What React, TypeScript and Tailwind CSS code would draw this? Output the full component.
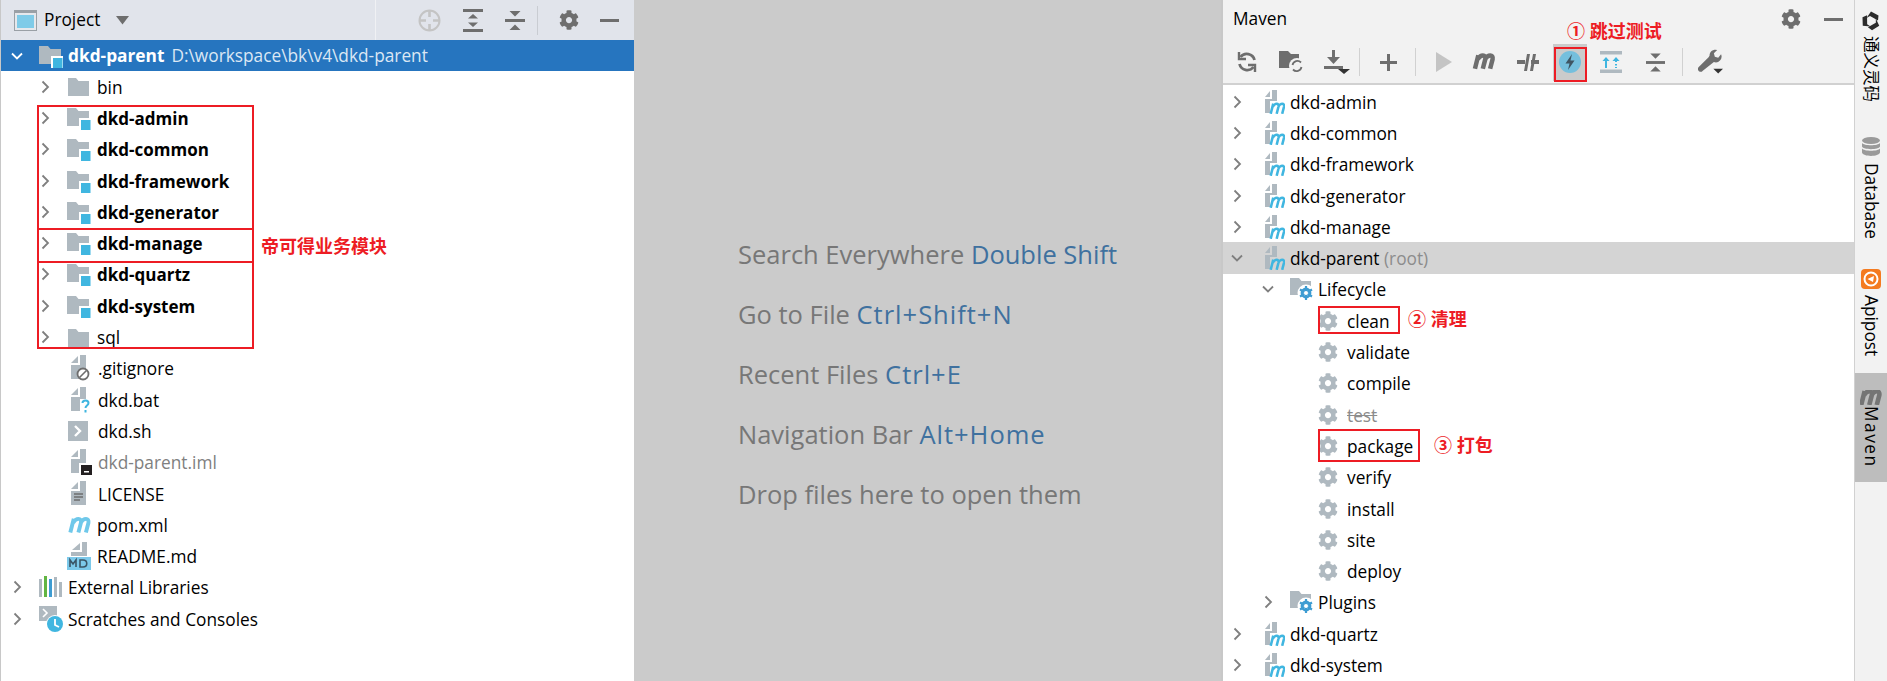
import type { ReactNode } from 'react';
import { FaCog } from 'react-icons/fa';

const FOLDER = '#AFB9C0';
const CYAN = '#40B6E0';

function Chevron({ open, white }: { open?: boolean; white?: boolean }) {
  const color = white ? '#ffffff' : '#7f7f7f';
  return (
    <svg width="14" height="14" viewBox="0 0 14 14" fill="none" stroke={color} strokeWidth="1.8">
      {open ? <path d="M2 4.5 7 9.5 12 4.5" /> : <path d="M4.5 1.5 10 7 4.5 12.5" />}
    </svg>
  );
}

function Folder() {
  return (
    <svg width="23" height="21" viewBox="0 0 23 21">
      <path d="M1 2h8l2.5 3H22v15H1z" fill={FOLDER} />
    </svg>
  );
}

function ModuleFolder() {
  return (
    <svg width="24" height="24" viewBox="0 0 24 24">
      <path d="M0 2h9l2.500 3H22v15H0z" fill={FOLDER} />
      <rect x="12" y="12" width="12" height="12" fill="#ffffff" />
      <rect x="14" y="14" width="9.500" height="10" fill={CYAN} />
    </svg>
  );
}

function FileBase({ children }: { children?: ReactNode }) {
  return (
    <svg width="24" height="26" viewBox="0 0 24 26">
      <path d="M3 8 10 1v7z" fill={FOLDER} />
      <path d="M12 0h6v24H3V10h9z" fill={FOLDER} />
      {children}
    </svg>
  );
}

function MavenM({ color, width = 2.6 }: { color: string; width?: number }) {
  return (
    <path
      d="M2 18 5 6M4.500 9.500C7 5 12 5 11.200 9.500L9 18M11 9.500C13.500 5 18.500 5 17.700 9.500L15.500 18"
      fill="none"
      stroke={color}
      strokeWidth={width}
    />
  );
}

function PomModule() {
  return (
    <svg width="21" height="24" viewBox="0 0 21 24">
      <path d="M1 7 6 1v6z" fill={FOLDER} />
      <path d="M8 0h5v11H6v12H1V9h7z" fill={FOLDER} />
      <g transform="translate(5 8.500) scale(0.85)">
        <MavenM color={CYAN} width={3} />
      </g>
    </svg>
  );
}

function FolderGear() {
  return (
    <svg width="24" height="24" viewBox="0 0 24 24">
      <path d="M0 1h9l2.500 3H21v14H0z" fill={FOLDER} />
      <circle cx="16" cy="16" r="8.500" fill="#ffffff" />
      <circle cx="16" cy="16" r="4" fill="none" stroke="#3D9CD2" strokeWidth="2.800" />
      <path d="M16 9v14M10 12.500l12 7M22 12.500l-12 7" stroke="#3D9CD2" strokeWidth="2.200" />
      <circle cx="16" cy="16" r="2" fill="#ffffff" />
    </svg>
  );
}

function Gear() {
  return <FaCog size={20} color={FOLDER} />;
}

function Libraries() {
  return (
    <svg width="23" height="24" viewBox="0 0 23 24">
      <rect x="0" y="4" width="3" height="18" fill={FOLDER} />
      <rect x="5" y="1" width="3" height="21" fill="#62B543" />
      <rect x="10" y="4" width="3" height="18" fill="#3D9CD2" />
      <rect x="15" y="2" width="3" height="20" fill={FOLDER} />
      <rect x="20" y="7" width="3" height="15" fill={FOLDER} />
    </svg>
  );
}

function Scratches() {
  return (
    <svg width="25" height="28" viewBox="0 0 25 28">
      <rect x="0" y="1" width="18" height="15" fill={FOLDER} />
      <path d="M4 4l4 4-4 4" fill="none" stroke="#ffffff" strokeWidth="1.600" />
      <circle cx="16" cy="19" r="9" fill="#ffffff" />
      <circle cx="16" cy="19" r="8" fill={CYAN} />
      <path d="M16 14v6l4 2" fill="none" stroke="#ffffff" strokeWidth="1.800" />
    </svg>
  );
}

type RowProps = {
  indent: string;
  chevronSlot?: string;
  iconSlot?: string;
  chevron?: 'open' | 'closed';
  icon: ReactNode;
  children: ReactNode;
  active?: string;
};

function Row({ indent, chevronSlot = 'w-[29px]', iconSlot = 'w-[30px]', chevron, icon, children, active = '' }: RowProps) {
  return (
    <div className={`flex h-[31.3px] items-center ${indent} ${active}`}>
      <div className={`flex shrink-0 items-center ${chevronSlot}`}>
        {chevron && <Chevron open={chevron === 'open'} />}
      </div>
      <div className={`flex shrink-0 items-center ${iconSlot}`}>{icon}</div>
      <span className="whitespace-nowrap pt-[2px]">{children}</span>
    </div>
  );
}

function ProjectPanel() {
  const file = 'pl-[37px]';
  const leaf = 'pl-[10px]';
  return (
    <div className="flex w-[634px] shrink-0 flex-col border-l border-[#c8c8c8] bg-white">
      <div className="flex h-[40px] items-center bg-[#e1e4eb] pl-[13px] pr-[11px] text-black">
        <svg width="23" height="21" viewBox="0 0 23 21">
          <rect x="0.500" y="0.500" width="22" height="20" fill="#e6e8ec" stroke="#9aa0a6" />
          <rect x="0" y="0" width="23" height="3" fill="#9aa0a6" />
          <rect x="3" y="5" width="17" height="13" fill="#7fcbe8" />
        </svg>
        <span className="ml-[7px]">Project</span>
        <svg className="ml-[16px]" width="13" height="9" viewBox="0 0 13 9">
          <path d="M0 0h13L6.500 8.500z" fill="#6e6e6e" />
        </svg>
        <div className="ml-[246px] h-[40px] w-px bg-[#f0f1f4]" />
        <svg className="ml-[42px]" width="23" height="23" viewBox="0 0 23 23" fill="none" stroke="#c4c4c4" strokeWidth="2">
          <circle cx="11.500" cy="11.500" r="10" />
          <path d="M11.500 2v6M11.500 15v6M2 11.500h6M15 11.500h6" strokeWidth="2.600" />
        </svg>
        <svg className="ml-[22px]" width="20" height="23" viewBox="0 0 20 23" fill="#6e6e6e">
          <rect y="0" width="20" height="3" />
          <rect y="20" width="20" height="3" />
          <path d="M5 9.500 10 5l5 4.500zM5 13.500 10 18l5-4.500z" />
        </svg>
        <svg className="ml-[22px]" width="20" height="21" viewBox="0 0 20 21" fill="#6e6e6e">
          <rect y="9" width="20" height="3" />
          <path d="M4.500 1h11L10 6.500zM4.500 20h11L10 14.500z" />
        </svg>
        <div className="ml-[12px] h-[29px] w-px bg-[#c9ccd2]" />
        <FaCog className="ml-[21px]" size={20} color="#6e6e6e" />
        <div className="ml-[21px] h-[3px] w-[19px] bg-[#6e6e6e]" />
      </div>
      <div className="flex h-[31px] items-center bg-[#2675bf] pl-[9px] text-white">
        <div className="flex w-[29px] items-center">
          <Chevron open white />
        </div>
        <div className="flex w-[29px] items-center">
          <ModuleFolder />
        </div>
        <span className="pt-px font-bold">dkd-parent</span>
        <span className="ml-[7px] pt-px text-[#dbe7f4]">D:\workspace\bk\v4\dkd-parent</span>
      </div>
      <Row indent={file} chevron="closed" icon={<Folder />}>bin</Row>
      {['dkd-admin', 'dkd-common', 'dkd-framework', 'dkd-generator', 'dkd-manage', 'dkd-quartz', 'dkd-system'].map((name) => (
        <Row key={name} indent={file} chevron="closed" icon={<ModuleFolder />}>
          <b className="text-[17px] font-bold">{name}</b>
        </Row>
      ))}
      <Row indent={file} chevron="closed" icon={<Folder />}>sql</Row>
      <Row indent={leaf} chevronSlot="w-[57px]" icon={
        <FileBase>
          <circle cx="15" cy="19" r="5.500" fill="#ffffff" stroke="#6e6e6e" strokeWidth="1.800" />
          <path d="M11.500 22.500 18.500 15.500" stroke="#6e6e6e" strokeWidth="1.600" />
        </FileBase>
      }>.gitignore</Row>
      <Row indent={leaf} chevronSlot="w-[57px]" icon={
        <FileBase>
          <rect x="12" y="12" width="12" height="14" fill="#ffffff" />
          <path d="M14.500 16c0-3.500 6-3.500 6 0 0 2.500-3 2.500-3 5M17.500 23v2.500" fill="none" stroke={CYAN} strokeWidth="2" />
        </FileBase>
      }>dkd.bat</Row>
      <Row indent={leaf} chevronSlot="w-[57px]" icon={
        <svg width="20" height="20" viewBox="0 0 20 20">
          <rect width="20" height="20" fill={FOLDER} />
          <path d="M7 5l5 5-5 5" fill="none" stroke="#ffffff" strokeWidth="2.400" />
        </svg>
      }>dkd.sh</Row>
      <Row indent={leaf} chevronSlot="w-[57px]" icon={
        <FileBase>
          <rect x="11" y="14" width="13" height="12" fill="#ffffff" />
          <rect x="13" y="16" width="11" height="10" fill="#231f20" />
          <rect x="16" y="22" width="5" height="1.500" fill="#ffffff" />
        </FileBase>
      }><span className="text-[#808080]">dkd-parent.iml</span></Row>
      <Row indent={leaf} chevronSlot="w-[57px]" icon={
        <FileBase>
          <path d="M6 13h9M6 16h9M6 19h6" stroke="#6e6e6e" strokeWidth="1.500" />
        </FileBase>
      }>LICENSE</Row>
      <Row indent={file} icon={
        <svg width="24" height="22" viewBox="0 0 20 20">
          <g transform="translate(0 -2) scale(1.05)">
            <MavenM color="#6FC8EA" width={3.400} />
          </g>
        </svg>
      }>pom.xml</Row>
      <Row indent={file} icon={
        <svg width="24" height="28" viewBox="0 0 24 28">
          <path d="M5 8 13 1v7z" fill={FOLDER} />
          <path d="M15 0h5v14H4V10h11z" fill={FOLDER} />
          <rect y="15" width="24" height="13" fill="#7CC9EA" />
          <path d="M3 25v-7l3 4 3-4v7M13 18v7h3c5 0 5-7 0-7z" fill="none" stroke="#3a5566" strokeWidth="1.600" />
        </svg>
      }>README.md</Row>
      <Row indent="pl-[9px]" iconSlot="w-[29px]" chevron="closed" icon={<Libraries />}>External Libraries</Row>
      <Row indent="pl-[9px]" iconSlot="w-[29px]" chevron="closed" icon={<Scratches />}>Scratches and Consoles</Row>
    </div>
  );
}

function Hint({ text, keys, tracking = '' }: { text: string; keys: string; tracking?: string }) {
  return (
    <div className="whitespace-nowrap">
      <span className="text-[#777777]">{text} </span>
      <span className={`text-[#3f719f] ${tracking}`}>{keys}</span>
    </div>
  );
}

function EmptyEditor() {
  return (
    <div className="flex flex-1 flex-col gap-[31px] bg-[#cbcbcb] pl-[104px] pt-[240px] text-[25.500px] leading-[29px]">
      <Hint text="Search Everywhere" keys="Double Shift" />
      <Hint text="Go to File" keys="Ctrl+Shift+N" tracking="tracking-[1px]" />
      <Hint text="Recent Files" keys="Ctrl+E" tracking="tracking-[1px]" />
      <Hint text="Navigation Bar" keys="Alt+Home" tracking="tracking-[1px]" />
      <div className="text-[#777777]">Drop files here to open them</div>
    </div>
  );
}

function ToolbarSep({ className }: { className: string }) {
  return <div className={`h-[28px] w-px bg-[#d1d1d1] ${className}`} />;
}

function MavenToolbar() {
  return (
    <div className="flex h-[47px] items-center border-b-2 border-[#d1d1d1] bg-[#f2f2f2] pl-[14px] pt-[3px]">
      <svg width="20" height="20" viewBox="0 0 20 20" fill="none" stroke="#6e6e6e" strokeWidth="2.800">
        <path d="M17.500 8A8 8 0 0 0 3.500 5M2.500 12a8 8 0 0 0 14 3" />
        <path d="M2 0v7h7M18 20v-7h-7" strokeWidth="2.400" />
      </svg>
      <svg className="ml-[22px]" width="26" height="23" viewBox="0 0 26 23">
        <path d="M0 0h9l3 3h8v14H0z" fill="#6e6e6e" />
        <circle cx="18" cy="15" r="8" fill="#f2f2f2" />
        <path d="M13.500 14a5 5 0 0 1 8.500-2.500M22.500 16a5 5 0 0 1-8.500 2.500" fill="none" stroke="#6e6e6e" strokeWidth="1.800" />
      </svg>
      <svg className="ml-[19px]" width="26" height="24" viewBox="0 0 26 24" fill="#6e6e6e">
        <rect x="8" y="0" width="3" height="8" />
        <path d="M3 7h13l-6.500 7z" />
        <rect x="0" y="16" width="19" height="3" />
        <path d="M14 19h12l-6 5z" fill="#333333" />
      </svg>
      <ToolbarSep className="ml-[9px]" />
      <svg className="ml-[20px]" width="17" height="17" viewBox="0 0 17 17" fill="#6e6e6e">
        <rect x="7" y="0" width="3" height="17" />
        <rect x="0" y="7" width="17" height="3" />
      </svg>
      <ToolbarSep className="ml-[18px]" />
      <svg className="ml-[20px]" width="16" height="20" viewBox="0 0 16 20">
        <path d="M0 0 16 10 0 20z" fill="#c4c4c4" />
      </svg>
      <svg className="ml-[20px]" width="25" height="18" viewBox="0 0 19 16">
        <g transform="translate(-1 -4)">
          <MavenM color="#6e6e6e" width={4} />
        </g>
      </svg>
      <svg className="ml-[20px]" width="22" height="22" viewBox="0 0 22 22" fill="#6e6e6e">
        <rect x="0" y="9" width="8" height="4" />
        <rect x="14" y="9" width="8" height="4" />
        <path d="M10 3h3L10 20H7zM16 3h3l-3 17h-3z" />
      </svg>
      <div className="ml-[14px] flex h-[37px] w-[34px] items-center justify-center bg-[#cbcbcb]">
        <svg width="22" height="22" viewBox="0 0 22 22">
          <circle cx="11" cy="11" r="11" fill="#75BFDD" />
          <path d="M13 3 6.500 12.500H10.500L9 19l6.500-9.500H11.500z" fill="#3f5563" />
        </svg>
      </div>
      <svg className="ml-[13px]" width="22" height="22" viewBox="0 0 22 22">
        <rect width="22" height="3.500" fill={FOLDER} />
        <rect y="18.500" width="22" height="3.500" fill={FOLDER} />
        <path d="M6 9v8M16 9v2M16 13v1.500M16 16v1" stroke={CYAN} strokeWidth="2" />
        <path d="M2.500 10 6 6l3.500 4zM12.500 10 16 6l3.500 4z" fill={CYAN} />
      </svg>
      <svg className="ml-[24px]" width="19" height="21" viewBox="0 0 20 21" fill="#6e6e6e">
        <rect y="9" width="20" height="3" />
        <path d="M4.500 1h11L10 6.500zM4.500 20h11L10 14.500z" />
      </svg>
      <ToolbarSep className="ml-[17px]" />
      <svg className="ml-[15px]" width="25" height="26" viewBox="0 0 26 26" fill="#6e6e6e">
        <path d="M12 6.500a6 6 0 0 1 8-6l-3.500 3.500 1 3.500 3.500 1 3-3.500a6 6 0 0 1-7.500 8L5 22a2.500 2.500 0 0 1-4.500-3.500L11 8z" />
        <path d="M16 20h10l-5 5z" fill="#333333" />
      </svg>
    </div>
  );
}

function MavenPanel() {
  const top = 'pl-[7px]';
  const nested = 'pl-[38px]';
  const goals = ['clean', 'validate', 'compile', 'test', 'package', 'verify', 'install', 'site', 'deploy'];
  const pom = { chevronSlot: 'w-[34px]', iconSlot: 'w-[26px]' };
  return (
    <div className="flex w-[633px] shrink-0 flex-col border-l-2 border-[#c8c8c8] bg-white">
      <div className="flex h-[38px] items-center bg-[#f2f2f2] pl-[10px] pr-[11px]">
        <span>Maven</span>
        <FaCog className="ml-auto" size={20} color="#6e6e6e" />
        <div className="ml-[23px] h-[3px] w-[19px] bg-[#6e6e6e]" />
      </div>
      <MavenToolbar />
      <div className="pt-px">
        {['dkd-admin', 'dkd-common', 'dkd-framework', 'dkd-generator', 'dkd-manage'].map((name) => (
          <Row key={name} indent={top} {...pom} chevron="closed" icon={<PomModule />}>{name}</Row>
        ))}
        <Row indent={top} {...pom} chevron="open" icon={<PomModule />} active="bg-[#d4d4d4]">
          dkd-parent <span className="text-[#8c8c8c]">(root)</span>
        </Row>
        <Row indent={nested} iconSlot="w-[28px]" chevron="open" icon={<FolderGear />}>Lifecycle</Row>
        {goals.map((goal) => (
          <Row key={goal} indent="pl-[66px]" iconSlot="w-[29px]" icon={<Gear />}>
            {goal === 'test' ? <span className="text-[#8c8c8c] line-through">test</span> : goal}
          </Row>
        ))}
        <Row indent={nested} iconSlot="w-[28px]" chevron="closed" icon={<FolderGear />}>Plugins</Row>
        {['dkd-quartz', 'dkd-system'].map((name) => (
          <Row key={name} indent={top} {...pom} chevron="closed" icon={<PomModule />}>{name}</Row>
        ))}
      </div>
    </div>
  );
}

function StripLabel({ children, className }: { children: ReactNode; className: string }) {
  return (
    <div className={`whitespace-nowrap leading-[20px] [text-orientation:sideways] [writing-mode:vertical-rl] ${className}`}>
      {children}
    </div>
  );
}

function TongyiLogo() {
  const blade = 'M10 0.500 17.500 4.500 17 9.500 13.500 7.500 9 5 5.500 7z';
  return (
    <svg className="mt-[11px] shrink-0" width="20" height="20" viewBox="0 0 20 20" fill="#2b2b2b">
      <path d={blade} />
      <path d={blade} transform="rotate(120 10 10)" />
      <path d={blade} transform="rotate(240 10 10)" />
    </svg>
  );
}

function ToolStrip() {
  return (
    <div className="flex w-[33px] shrink-0 flex-col items-center border-l border-[#d1d1d1] bg-[#f2f2f2] text-black">
      <TongyiLogo />
      <StripLabel className="mt-[5px] h-[67px] text-[16.500px]">通义灵码</StripLabel>
      <svg className="mt-[34px] shrink-0" width="18" height="19" viewBox="0 0 18 19" fill="#9a9a9a">
        <ellipse cx="9" cy="3.500" rx="9" ry="3.500" />
        <path d="M0 6c2 3 16 3 18 0v3.500c-1 3.500-17 3.500-18 0z" />
        <path d="M0 11.500c2 3 16 3 18 0V15.500c-1 4.500-17 4.500-18 0z" />
      </svg>
      <StripLabel className="mt-[7px] h-[74px]">Database</StripLabel>
      <svg className="mt-[32px] shrink-0" width="20" height="20" viewBox="0 0 20 20">
        <rect width="20" height="20" rx="4" fill="#F47B20" />
        <circle cx="10" cy="10" r="6.500" fill="none" stroke="#ffffff" strokeWidth="2" />
        <path d="M6.500 10 13 7l-1 6z" fill="#ffffff" />
      </svg>
      <StripLabel className="mt-[6px] h-[63px]">Apipost</StripLabel>
      <div className="mt-[15px] flex h-[109px] w-full flex-col items-center bg-[#bdbdbd] pt-[17px]">
        <svg className="shrink-0" width="22" height="15" viewBox="0 0 19 13">
          <g transform="translate(-1 -5)">
            <MavenM color="#757575" width={4} />
          </g>
        </svg>
        <StripLabel className="mt-px tracking-[1.500px]">Maven</StripLabel>
      </div>
    </div>
  );
}

function Box({ className }: { className: string }) {
  return <div className={`absolute border-2 border-[#ed1c24] ${className}`} />;
}

function Note({ className, children }: { className: string; children: ReactNode }) {
  return (
    <div className={`absolute whitespace-nowrap text-[18px] font-bold leading-[24px] text-[#ed1c24] ${className}`}>
      {children}
    </div>
  );
}

export default function App() {
  return (
    <div className="relative flex h-[681px] w-[1887px] overflow-hidden bg-white font-['Open_Sans','Noto_Sans_CJK_SC',sans-serif] text-[17.300px] text-black">
      <ProjectPanel />
      <EmptyEditor />
      <MavenPanel />
      <ToolStrip />

      <Box className="left-[37px] top-[105px] h-[125px] w-[217px]" />
      <Box className="left-[37px] top-[228px] h-[35px] w-[217px]" />
      <Box className="left-[37px] top-[261px] h-[88px] w-[217px]" />
      <Note className="left-[261px] top-[234px]">帝可得业务模块</Note>

      <Box className="left-[1554px] top-[47px] h-[35px] w-[33px]" />
      <Note className="left-[1567px] top-[19px]">① 跳过测试</Note>
      <Box className="left-[1318px] top-[306px] h-[28px] w-[82px]" />
      <Note className="left-[1408px] top-[307px]">② 清理</Note>
      <Box className="left-[1318px] top-[429px] h-[33px] w-[102px]" />
      <Note className="left-[1434px] top-[433px]">③ 打包</Note>
    </div>
  );
}
